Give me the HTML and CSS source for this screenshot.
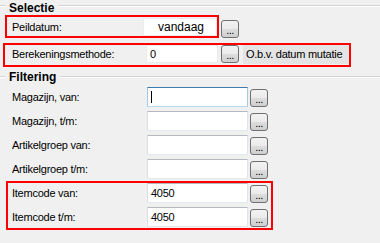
FILE: index.html
```html
<!DOCTYPE html>
<html lang="nl">

<head>
    <meta charset="UTF-8">
    <title>Selectie</title>
    <link rel="stylesheet" href="styles.css">
</head>

<body>
    <div class="legend legend-top">Selectie</div>

    <div class="row">
        <div class="mark mark-peil">
            <span class="label">Peildatum:</span>
            <span class="field field-plain field-peil">vandaag</span>
        </div>
        <span class="btn btn-peil">...</span>
    </div>

    <div class="mark mark-methode">
        <span class="label">Berekeningsmethode:</span>
        <span class="field field-plain field-methode">0</span>
        <span class="btn btn-methode">...</span>
        <span class="info">O.b.v. datum mutatie</span>
    </div>

    <div class="legend legend-filter">Filtering</div>

    <div class="frow first">
        <span class="label">Magazijn, van:</span>
        <span class="field focus"><span class="caret"></span></span>
        <span class="btn">...</span>
    </div>
    <div class="frow">
        <span class="label">Magazijn, t/m:</span>
        <span class="field"></span>
        <span class="btn">...</span>
    </div>
    <div class="frow">
        <span class="label">Artikelgroep van:</span>
        <span class="field"></span>
        <span class="btn">...</span>
    </div>
    <div class="frow">
        <span class="label">Artikelgroep t/m:</span>
        <span class="field"></span>
        <span class="btn">...</span>
    </div>

    <div class="mark mark-item">
        <div class="frow first">
            <span class="label">Itemcode van:</span>
            <span class="field">4050</span>
            <span class="btn">...</span>
        </div>
        <div class="frow">
            <span class="label">Itemcode t/m:</span>
            <span class="field">4050</span>
            <span class="btn">...</span>
        </div>
    </div>
</body>

</html>
```

FILE: styles.css
```css
html,
body {
    margin: 0;
}

body {
    width: 380px;
    height: 243px;
    padding-top: 2px;
    box-sizing: border-box;
    overflow: hidden;
    background: #f0f0f0;
    color: #000;
    font-family: "Liberation Sans", Arial, sans-serif;
    font-size: 11px;
}

/* group titles */
.legend {
    display: flex;
    align-items: flex-start;
    height: 13px;
    line-height: 13px;
    font-size: 12px;
    font-weight: bold;
}

.legend::before,
.legend::after {
    content: "";
    height: 0;
    border-top: 1px solid #d5d5d5;
    border-bottom: 1px solid #fff;
}

.legend::before {
    width: 6px;
    margin-right: 3px;
}

.legend::after {
    flex: 1;
    margin-left: 4px;
}

.legend-top::before,
.legend-top::after {
    margin-top: 3px;
}

.legend-filter {
    margin-top: 4px;
}

.legend-filter::before,
.legend-filter::after {
    margin-top: 5px;
}

/* red annotation frames */
.mark {
    border: 2px solid #ff0000;
    box-sizing: border-box;
}

.row {
    display: flex;
    align-items: flex-start;
}

.mark-peil {
    display: flex;
    align-items: center;
    margin-left: 5px;
    width: 214px;
    height: 23px;
    padding-left: 5px;
}

.mark-peil .label {
    width: 131px;
}

.mark-methode {
    display: flex;
    align-items: flex-start;
    margin: 5px 0 0 3px;
    width: 348px;
    height: 24px;
    padding-left: 7px;
}

.mark-methode .label {
    width: 134px;
    line-height: 19px;
}

.mark-item {
    margin: 2px 0 0 6px;
    width: 267px;
    padding: 0 0 1px 4px;
}

.mark-item .frow {
    padding-left: 0;
}

.label,
.info,
.field {
    letter-spacing: -0.25px;
}

.label {
    flex-shrink: 0;
    white-space: nowrap;
}

/* text boxes */
.field {
    display: flex;
    align-items: center;
    box-sizing: border-box;
    width: 101px;
    height: 20px;
    padding-left: 3px;
    background: #fff;
    border: 1px solid;
    border-color: #b5b8c0 #e2e3ea #e3e9ef #dbdfe6;
    font-size: 11px;
}

.field.focus {
    border-color: #3d7bad #a4c9e3 #b7d9ed #a4c9e3;
}

.caret {
    width: 0;
    height: 12px;
    border-left: 1px solid #000;
}

.field-plain {
    border-color: #ececec;
}

.field-peil {
    width: 74px;
    height: 18px;
    padding-left: 14px;
    font-size: 12px;
    letter-spacing: 0;
}

.field-methode {
    width: 72px;
    height: 18px;
}

/* "..." buttons */
.btn {
    display: flex;
    align-items: flex-end;
    justify-content: center;
    box-sizing: border-box;
    width: 18px;
    height: 18px;
    padding-bottom: 3px;
    margin: 2px 0 0 2px;
    border: 1px solid #707070;
    border-radius: 3px;
    background: linear-gradient(#f2f2f2 0%, #ebebeb 50%, #dddddd 51%, #cfcfcf 100%);
    font-size: 11px;
    line-height: 8px;
    letter-spacing: -0.5px;
}

.btn-peil {
    margin: 5px 0 0 2px;
}

.btn-methode {
    margin: 0 0 0 3px;
}

.info {
    flex: 1;
    height: 19px;
    margin: 0 1px 0 4px;
    padding-left: 3px;
    line-height: 19px;
    background: #e4e4e4;
    white-space: nowrap;
}

/* filter rows */
.frow {
    display: flex;
    align-items: center;
    height: 20px;
    margin-top: 4px;
    padding-left: 12px;
}

.frow.first {
    margin-top: 3px;
}

.mark-item .frow.first {
    margin-top: 0;
}

.frow .label {
    width: 135px;
}

.frow .btn {
    align-self: flex-end;
}
```
